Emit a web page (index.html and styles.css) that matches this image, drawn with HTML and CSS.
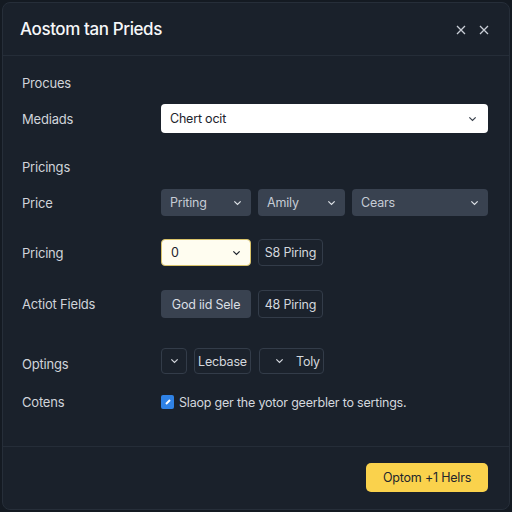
FILE: index.html
```html
<!DOCTYPE html>
<html>
<head>
<meta charset="utf-8">
<link rel="stylesheet" href="styles.css">
</head>
<body>
<div class="dialog">
  <div class="header">
    <h1 class="title">Aostom tan Prieds</h1>
    <div class="hicons">
      <svg class="x" viewBox="0 0 10 10"><path d="M1 1L9 9M9 1L1 9"/></svg>
      <svg class="x" viewBox="0 0 10 10"><path d="M1 1L9 9M9 1L1 9"/></svg>
    </div>
  </div>
  <div class="body">
    <div class="row r1"><span class="label">Procues</span></div>
    <div class="row r2"><span class="label">Mediads</span>
      <div class="field white wide">Chert ocit<svg class="chev" viewBox="0 0 10 6"><path d="M1.5 1.2L5 4.5L8.5 1.2"/></svg></div>
    </div>
    <div class="row r3"><span class="label">Pricings</span></div>
    <div class="row r4"><span class="label">Price</span>
      <div class="controls">
        <div class="field filled w90">Priting<svg class="chev" viewBox="0 0 10 6"><path d="M1.5 1.2L5 4.5L8.5 1.2"/></svg></div>
        <div class="field filled w87">Amily<svg class="chev" viewBox="0 0 10 6"><path d="M1.5 1.2L5 4.5L8.5 1.2"/></svg></div>
        <div class="field filled grow">Cears<svg class="chev" viewBox="0 0 10 6"><path d="M1.5 1.2L5 4.5L8.5 1.2"/></svg></div>
      </div>
    </div>
    <div class="row r5"><span class="label">Pricing</span>
      <div class="controls">
        <div class="field cream w90">0<svg class="chev" viewBox="0 0 10 6"><path d="M1.5 1.2L5 4.5L8.5 1.2"/></svg></div>
        <div class="btn outline w65">S8 Piring</div>
      </div>
    </div>
    <div class="row r6"><span class="label">Actiot Fields</span>
      <div class="controls">
        <div class="btn filledbtn w90">God iid Sele</div>
        <div class="btn outline w65">48 Piring</div>
      </div>
    </div>
    <div class="row r7"><span class="label">Optings</span>
      <div class="controls">
        <div class="btn outline sq"><svg class="chev" viewBox="0 0 10 6"><path d="M1.5 1.2L5 4.5L8.5 1.2"/></svg></div>
        <div class="btn outline w57">Lecbase</div>
        <div class="btn outline w65 toly">
          <svg class="chev" viewBox="0 0 10 6"><path d="M1.5 1.2L5 4.5L8.5 1.2"/></svg><span>Toly</span></div>
      </div>
    </div>
    <div class="row r8"><span class="label">Cotens</span>
      <div class="check">
        <span class="box"><svg viewBox="0 0 10 10"><path d="M3 7L7 3"/></svg></span>
        <span>Slaop ger the yotor geerbler to sertings.</span>
      </div>
    </div>
  </div>
  <div class="footer">
    <div class="primary">Optom +1 Helrs</div>
  </div>
</div>
</body>
</html>
```
FILE: styles.css
```css
html, body {
  margin: 0;
  padding: 0;
  background: #141a22;
}
body {
  font-family: Inter, "Noto Sans", sans-serif;
  color: #d3d7dd;
  letter-spacing: -0.2px;
}
.dialog {
  margin: 2px;
  height: 508px;
  box-sizing: border-box;
  background: #1a212b;
  border: 1px solid #262e39;
  border-radius: 8px;
  display: flex;
  flex-direction: column;
}
.header {
  height: 52px;
  flex: none;
  display: flex;
  align-items: center;
  justify-content: space-between;
  padding: 0 20px 0 17px;
  border-bottom: 1px solid #252d38;
}
.title {
  margin: 0;
  font-size: 17px;
  font-weight: 500;
  color: #f6f7f9;
  letter-spacing: -0.4px;
}
.hicons {
  display: flex;
  gap: 13px;
  margin-top: 2px;
}
.x {
  width: 10px;
  height: 10px;
  stroke: #c9ced6;
  stroke-width: 1.3;
  fill: none;
}
.body {
  flex: 1;
  padding: 14px 21px 0 19px;
  display: flex;
  flex-direction: column;
}
.row {
  display: flex;
  align-items: center;
  white-space: nowrap;
}
.label {
  width: 139px;
  flex: none;
  font-size: 13px;
  color: #d0d4da;
}
.r1 { height: 26px; }
.r2 { height: 29px; margin-top: 8px; }
.r3 { height: 24px; margin-top: 22px; }
.r4 { height: 27px; margin-top: 10px; }
.r5 { height: 27px; margin-top: 23px; }
.r6 { height: 28px; margin-top: 24px; }
.r7 { height: 26px; margin-top: 30px; }
.r8 { height: 24px; margin-top: 16px; }
.r7 .label { margin-top: 6px; }
.controls {
  display: flex;
  gap: 7px;
  flex: 1;
  height: 100%;
}
.field {
  box-sizing: border-box;
  height: 100%;
  border-radius: 4px;
  display: flex;
  align-items: center;
  justify-content: space-between;
  padding: 0 9px 0 9px;
  font-size: 12.5px;
}
.chev {
  flex: none;
  width: 9px;
  height: 6px;
  fill: none;
  stroke: currentColor;
  stroke-width: 1.4;
}
.white {
  flex: 1;
  background: #ffffff;
  color: #1d232c;
  padding-left: 9px;
  padding-right: 11px;
}
.white .chev { stroke: #3a414c; }
.filled {
  background: #394250;
  color: #c6ccd5;
}
.filled .chev { stroke: #dde1e6; }
.w90 { width: 90px; flex: none; }
.w87 { width: 87px; flex: none; }
.w65 { width: 65px; flex: none; }
.w57 { width: 57px; flex: none; margin-right: 1px; }
.grow { flex: 1; }
.cream {
  background: #fffdf0;
  border: 1px solid #d9c36a;
  color: #1d232c;
}
.btn {
  box-sizing: border-box;
  height: 100%;
  border-radius: 4px;
  display: flex;
  align-items: center;
  justify-content: center;
  font-size: 12.5px;
  padding: 0;
}
.outline {
  border: 1px solid #333c49;
  background: #1b222c;
  color: #d3d7dd;
}
.toly {
  gap: 12px;
  justify-content: flex-start;
  padding-left: 15px;
}
.sq { width: 26px; flex: none; }
.filledbtn {
  background: #394250;
  color: #dadee4;
}
.check {
  display: flex;
  align-items: center;
  gap: 5px;
  font-size: 12.5px;
  color: #d3d7dd;
}
.box {
  width: 13px;
  height: 14px;
  border-radius: 2px;
  background: #2f82e6;
  display: flex;
  align-items: center;
  justify-content: center;
}
.box svg {
  width: 10px;
  height: 10px;
  stroke: #ffffff;
  stroke-width: 2;
  fill: none;
}
.footer {
  height: 60px;
  flex: none;
  border-top: 1px solid #252d38;
  display: flex;
  align-items: center;
  justify-content: flex-end;
  padding: 0 21px 2px 0;
}
.primary {
  width: 122px;
  height: 29px;
  box-sizing: border-box;
  background: #fad24c;
  border-radius: 5px;
  display: flex;
  align-items: center;
  justify-content: center;
  color: #22262c;
  font-size: 12.5px;
}
```
